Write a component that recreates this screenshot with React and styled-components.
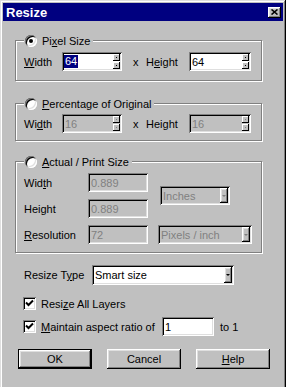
import React from "react";
import styled, { createGlobalStyle, css } from "styled-components";

const GlobalStyle = createGlobalStyle`
  html, body {
    margin: 0;
    padding: 0;
    background: #c0c0c0;
    overflow: hidden;
  }
  body {
    font-family: "Liberation Sans", Arial, sans-serif;
    font-size: 11px;
    color: #000;
  }
`;

const raised = css`
  box-shadow: inset -1px -1px #000, inset 1px 1px #fff, inset -2px -2px #808080,
    inset 2px 2px #dfdfdf;
`;

const sunken = css`
  box-shadow: inset 1px 1px #808080, inset -1px -1px #fff, inset 2px 2px #000,
    inset -2px -2px #dfdfdf;
`;

const Window = styled.div`
  width: 286px;
  height: 392px;
  box-sizing: border-box;
  padding: 3px;
  background: #c0c0c0;
  box-shadow: inset -1px -1px #000, inset 1px 1px #dfdfdf, inset -2px -2px #808080,
    inset 2px 2px #fff;
`;

const TitleBar = styled.div`
  height: 18px;
  background: #000080;
  color: #fff;
  display: flex;
  align-items: center;
  justify-content: space-between;
  padding: 0 2px 0 3px;
  font-weight: bold;
  font-size: 13px;
`;

const CloseBtn = styled.div`
  width: 13px;
  height: 11px;
  background: #c0c0c0;
  ${raised};
  display: flex;
  align-items: center;
  justify-content: center;
`;

const Group = styled.fieldset`
  margin: ${(p) => p.$mt}px 0 0 12px;
  width: 247px;
  min-width: 0;
  box-sizing: border-box;
  border: 1px solid #808080;
  box-shadow: 1px 1px 0 #fff, inset 1px 1px 0 #fff;
  padding: ${(p) => p.$pt}px 8px ${(p) => p.$pb}px 8px;
`;

const Legend = styled.legend`
  display: flex;
  align-items: center;
  gap: 5px;
  height: 13px;
  padding: 0 3px 0 1px;
  background: #c0c0c0;
`;

const Radio = styled.span`
  width: 12px;
  height: 12px;
  flex: none;
  border-radius: 50%;
  background: #fff;
  box-shadow: inset 1px 1px #808080, inset -1px -1px #fff, inset 2px 2px #000,
    inset -2px -2px #dfdfdf;
  display: flex;
  align-items: center;
  justify-content: center;

  &::after {
    content: "";
    width: 4px;
    height: 4px;
    border-radius: 50%;
    background: ${(p) => (p.$on ? "#000" : "transparent")};
  }
`;

const Row = styled.div`
  display: flex;
  align-items: center;
  height: ${(p) => p.$h || 19}px;
  margin-top: ${(p) => p.$mt || 0}px;
  padding-left: ${(p) => p.$pl || 0}px;
`;

const Label = styled.span`
  width: ${(p) => (p.$w ? `${p.$w}px` : "auto")};
  margin-left: ${(p) => p.$ml || 0}px;
  flex: none;
  white-space: nowrap;
`;

const Field = styled.div`
  width: ${(p) => p.$w}px;
  height: ${(p) => p.$h || 19}px;
  margin-left: ${(p) => p.$ml || 0}px;
  box-sizing: border-box;
  flex: none;
  display: flex;
  align-items: center;
  padding: 2px 2px 2px 3px;
  background: ${(p) => (p.$disabled ? "#c0c0c0" : "#fff")};
  color: ${(p) => (p.$disabled ? "#808080" : "#000")};
  ${sunken};
`;

const Selected = styled.span`
  background: #000080;
  color: #fff;
  margin-left: -1px;
  padding: 0 1px;
  line-height: 13px;
`;

const Spin = styled.div`
  margin-left: auto;
  width: 7px;
  height: 15px;
  display: flex;
  flex-direction: column;
  gap: 1px;
`;

const SpinHalf = styled.div`
  flex: 1;
  background: #c0c0c0;
  box-shadow: inset -1px -1px #000, inset 1px 1px #fff;
  display: flex;
  align-items: center;
  justify-content: center;

  &::after {
    content: "";
    width: 1px;
    height: 1px;
    background: ${(p) => (p.$disabled ? "#808080" : "#000")};
  }
`;

const DropBtn = styled.div`
  margin-left: auto;
  width: 8px;
  align-self: stretch;
  background: #c0c0c0;
  ${raised};
  display: flex;
  align-items: center;
  justify-content: center;

  &::after {
    content: "";
    border-left: 2px solid transparent;
    border-right: 2px solid transparent;
    border-top: 2px solid ${(p) => (p.$disabled ? "#808080" : "#000")};
  }
`;

const Grid = styled.div`
  display: grid;
  grid-template-columns: 64px 60px 1fr;
  grid-template-rows: repeat(3, 19px);
  row-gap: 7px;
  align-items: center;
`;

const GridSelect = styled(Field)`
  grid-column: 3;
  grid-row: ${(p) => p.$row};
  align-self: center;
`;

const Check = styled.span`
  width: 13px;
  height: 13px;
  flex: none;
  box-sizing: border-box;
  background: #fff;
  ${sunken};
  display: flex;
  align-items: center;
  justify-content: center;
`;

const CheckRow = styled(Row)`
  padding-left: 20px;
  gap: 5px;
`;

const Buttons = styled.div`
  display: flex;
  gap: 15px;
  margin: 13px 0 0 15px;
`;

const Button = styled.button`
  width: 74px;
  height: 20px;
  padding: 0;
  font: inherit;
  color: #000;
  background: #c0c0c0;
  box-sizing: border-box;
  border: ${(p) => (p.$default ? "1px solid #000" : "none")};
  ${raised};
`;

const Spinner = ({ disabled }) => (
  <Spin>
    <SpinHalf $disabled={disabled} />
    <SpinHalf $disabled={disabled} />
  </Spin>
);

const Tick = () => (
  <svg width="9" height="9" viewBox="0 0 9 9">
    <polyline points="1,3.5 3.5,6 8,1.5" fill="none" stroke="#000" strokeWidth="2" />
  </svg>
);

export default function App() {
  return (
    <>
      <GlobalStyle />
      <Window>
        <TitleBar>
          <span>Resize</span>
          <CloseBtn>
            <svg width="7" height="6" viewBox="0 0 7 6">
              <path d="M0.5 0.5 L6.5 5.5 M6.5 0.5 L0.5 5.5" stroke="#000" strokeWidth="1.6" />
            </svg>
          </CloseBtn>
        </TitleBar>

        <Group $mt={13} $pt={5} $pb={9}>
          <Legend>
            <Radio $on />
            <span>
              Pi<u>x</u>el Size
            </span>
          </Legend>
          <Row>
            <Label $w={38}>
              <u>W</u>idth
            </Label>
            <Field $w={60}>
              <Selected>64</Selected>
              <Spinner />
            </Field>
            <Label $w={13} $ml={11}>
              x
            </Label>
            <Label $w={43}>
              H<u>e</u>ight
            </Label>
            <Field $w={62}>
              64
              <Spinner />
            </Field>
          </Row>
        </Group>

        <Group $mt={16} $pt={4} $pb={7}>
          <Legend>
            <Radio />
            <span>
              <u>P</u>ercentage of Original
            </span>
          </Legend>
          <Row>
            <Label $w={38}>
              Wi<u>d</u>th
            </Label>
            <Field $w={60} $disabled>
              16
              <Spinner disabled />
            </Field>
            <Label $w={13} $ml={11}>
              x
            </Label>
            <Label $w={43}>
              Hei<u>g</u>ht
            </Label>
            <Field $w={62} $disabled>
              16
              <Spinner disabled />
            </Field>
          </Row>
        </Group>

        <Group $mt={14} $pt={5} $pb={8}>
          <Legend>
            <Radio />
            <span>
              <u>A</u>ctual / Print Size
            </span>
          </Legend>
          <Grid>
            <Label>
              Wid<u>t</u>h
            </Label>
            <Field $w={60} $disabled>
              0.889
            </Field>
            <GridSelect $row="1 / 3" $w={70} $ml={12} $disabled>
              Inches
              <DropBtn $disabled />
            </GridSelect>
            <Label>Height</Label>
            <Field $w={60} $disabled>
              0.889
            </Field>
            <Label>
              <u>R</u>esolution
            </Label>
            <Field $w={60} $disabled>
              72
            </Field>
            <GridSelect $row="3" $w={94} $ml={10} $disabled>
              Pixels / inch
              <DropBtn $disabled />
            </GridSelect>
          </Grid>
        </Group>

        <Row $h={20} $mt={12} $pl={21}>
          <Label $w={68}>
            Resize T<u>y</u>pe
          </Label>
          <Field $w={142} $h={20}>
            Smart size
            <DropBtn />
          </Field>
        </Row>

        <CheckRow $h={13} $mt={12}>
          <Check>
            <Tick />
          </Check>
          <span>
            Resi<u>z</u>e All Layers
          </span>
        </CheckRow>

        <CheckRow $mt={7}>
          <Check>
            <Tick />
          </Check>
          <Label $w={116}>
            <u>M</u>aintain aspect ratio of
          </Label>
          <Field $w={52}>1</Field>
          <Label $ml={1}>to 1</Label>
        </CheckRow>

        <Buttons>
          <Button $default>OK</Button>
          <Button>Cancel</Button>
          <Button>
            <u>H</u>elp
          </Button>
        </Buttons>
      </Window>
    </>
  );
}
